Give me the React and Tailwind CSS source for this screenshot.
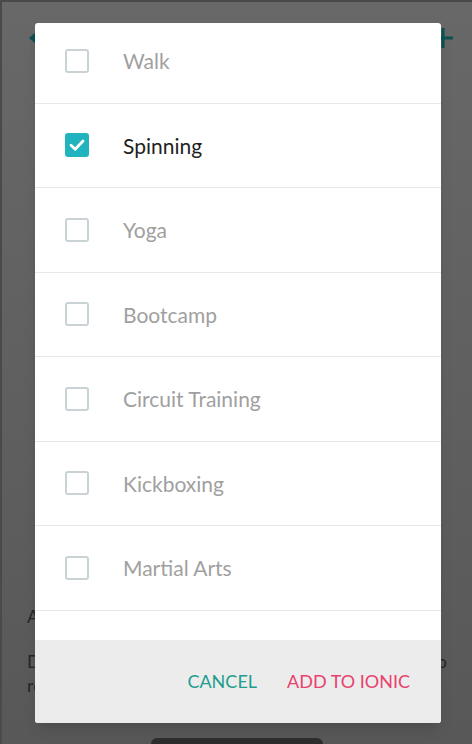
import React from 'react'

const options = [
    { label: 'Walk', checked: false },
    { label: 'Spinning', checked: true },
    { label: 'Yoga', checked: false },
    { label: 'Bootcamp', checked: false },
    { label: 'Circuit Training', checked: false },
    { label: 'Kickboxing', checked: false },
    { label: 'Martial Arts', checked: false },
    { label: 'Pilates', checked: false },
]

const Checkbox = ({ checked }) => (
    checked ? (
        <div className='w-6 h-6 rounded-[3px] bg-[#22b4be] flex items-center justify-center'>
            <svg width="18" height="18" viewBox="0 0 18 18" fill="none">
                <path d="M3 9.2 L7.2 13.2 L15 5" stroke="white" strokeWidth="2.8" strokeLinecap="round" strokeLinejoin="round" />
            </svg>
        </div>
    ) : (
        <div className='w-6 h-6 rounded-[3px] border-2 border-[#c9d3d6] bg-white' />
    )
)

const App = () => {
    const [items, setItems] = React.useState(options)

    const toggle = (i) => {
        setItems((prev) => prev.map((it, idx) => idx === i ? { ...it, checked: !it.checked } : it))
    }

    return (
        <div className='relative w-[472px] h-[744px] overflow-hidden bg-gradient-to-b from-[#686868] to-[#585858] border-l-2 border-t-2 border-[#4a4a4a]' style={{ fontFamily: 'Lato, "Open Sans", sans-serif' }}>

            {/* page behind the dialog */}
            <div className='flex flex-col h-full'>
                <div className='flex items-center justify-between pl-[24px] pr-[18px] h-[72px]'>
                    <svg width="16" height="16" viewBox="0 0 16 16">
                        <path d="M10 2 L3 8 L10 14 Z" fill="#0d5050" />
                    </svg>
                    <svg width="22" height="22" viewBox="0 0 22 22">
                        <path d="M11 1 V21 M1 11 H21" stroke="#0d5050" strokeWidth="3" />
                    </svg>
                </div>
                <div className='flex-1' />
                <div className='px-[25px] text-[#262626] text-[18px] leading-[24px] whitespace-nowrap'>
                    <p className='mb-[21px]'>About this class</p>
                    <div className='flex justify-between'>
                        <span>Describe the class</span>
                        <span>so members know what to</span>
                    </div>
                    <p>ready themselves for the session</p>
                </div>
                <div className='h-[47px] flex justify-center items-end'>
                    <div className='w-[172px] h-[6px] rounded-t-[6px] bg-[#2e2e2e]' />
                </div>
            </div>

            {/* dialog */}
            <div className='absolute left-[33px] top-[21px] w-[406px] h-[700px] rounded-[3px] bg-white flex flex-col overflow-hidden shadow-lg'>
                <div className='flex-1 overflow-hidden'>
                    <div className='-mt-[4px]'>
                        {items.map((item, i) => (
                            <button
                                key={item.label}
                                type="button"
                                onClick={() => toggle(i)}
                                className='w-full h-[84.5px] flex items-center border-b border-[#e8e8e8] text-left'
                            >
                                <div className='ml-[30px]'>
                                    <Checkbox checked={item.checked} />
                                </div>
                                <span className={`ml-[34px] text-[21px] ${item.checked ? 'text-[#1f1f1f]' : 'text-[#a0a0a0]'}`}>
                                    {item.label}
                                </span>
                            </button>
                        ))}
                    </div>
                </div>
                <div className='h-[83px] shrink-0 bg-[#ececec] flex items-center justify-end pr-[31px] gap-[30px] text-[18px] [word-spacing:-3px]'>
                    <button type="button" className='text-[#1e9e8e]'>CANCEL</button>
                    <button type="button" className='text-[#e8426e]'>ADD TO IONIC</button>
                </div>
            </div>
        </div>
    )
}

export default App
